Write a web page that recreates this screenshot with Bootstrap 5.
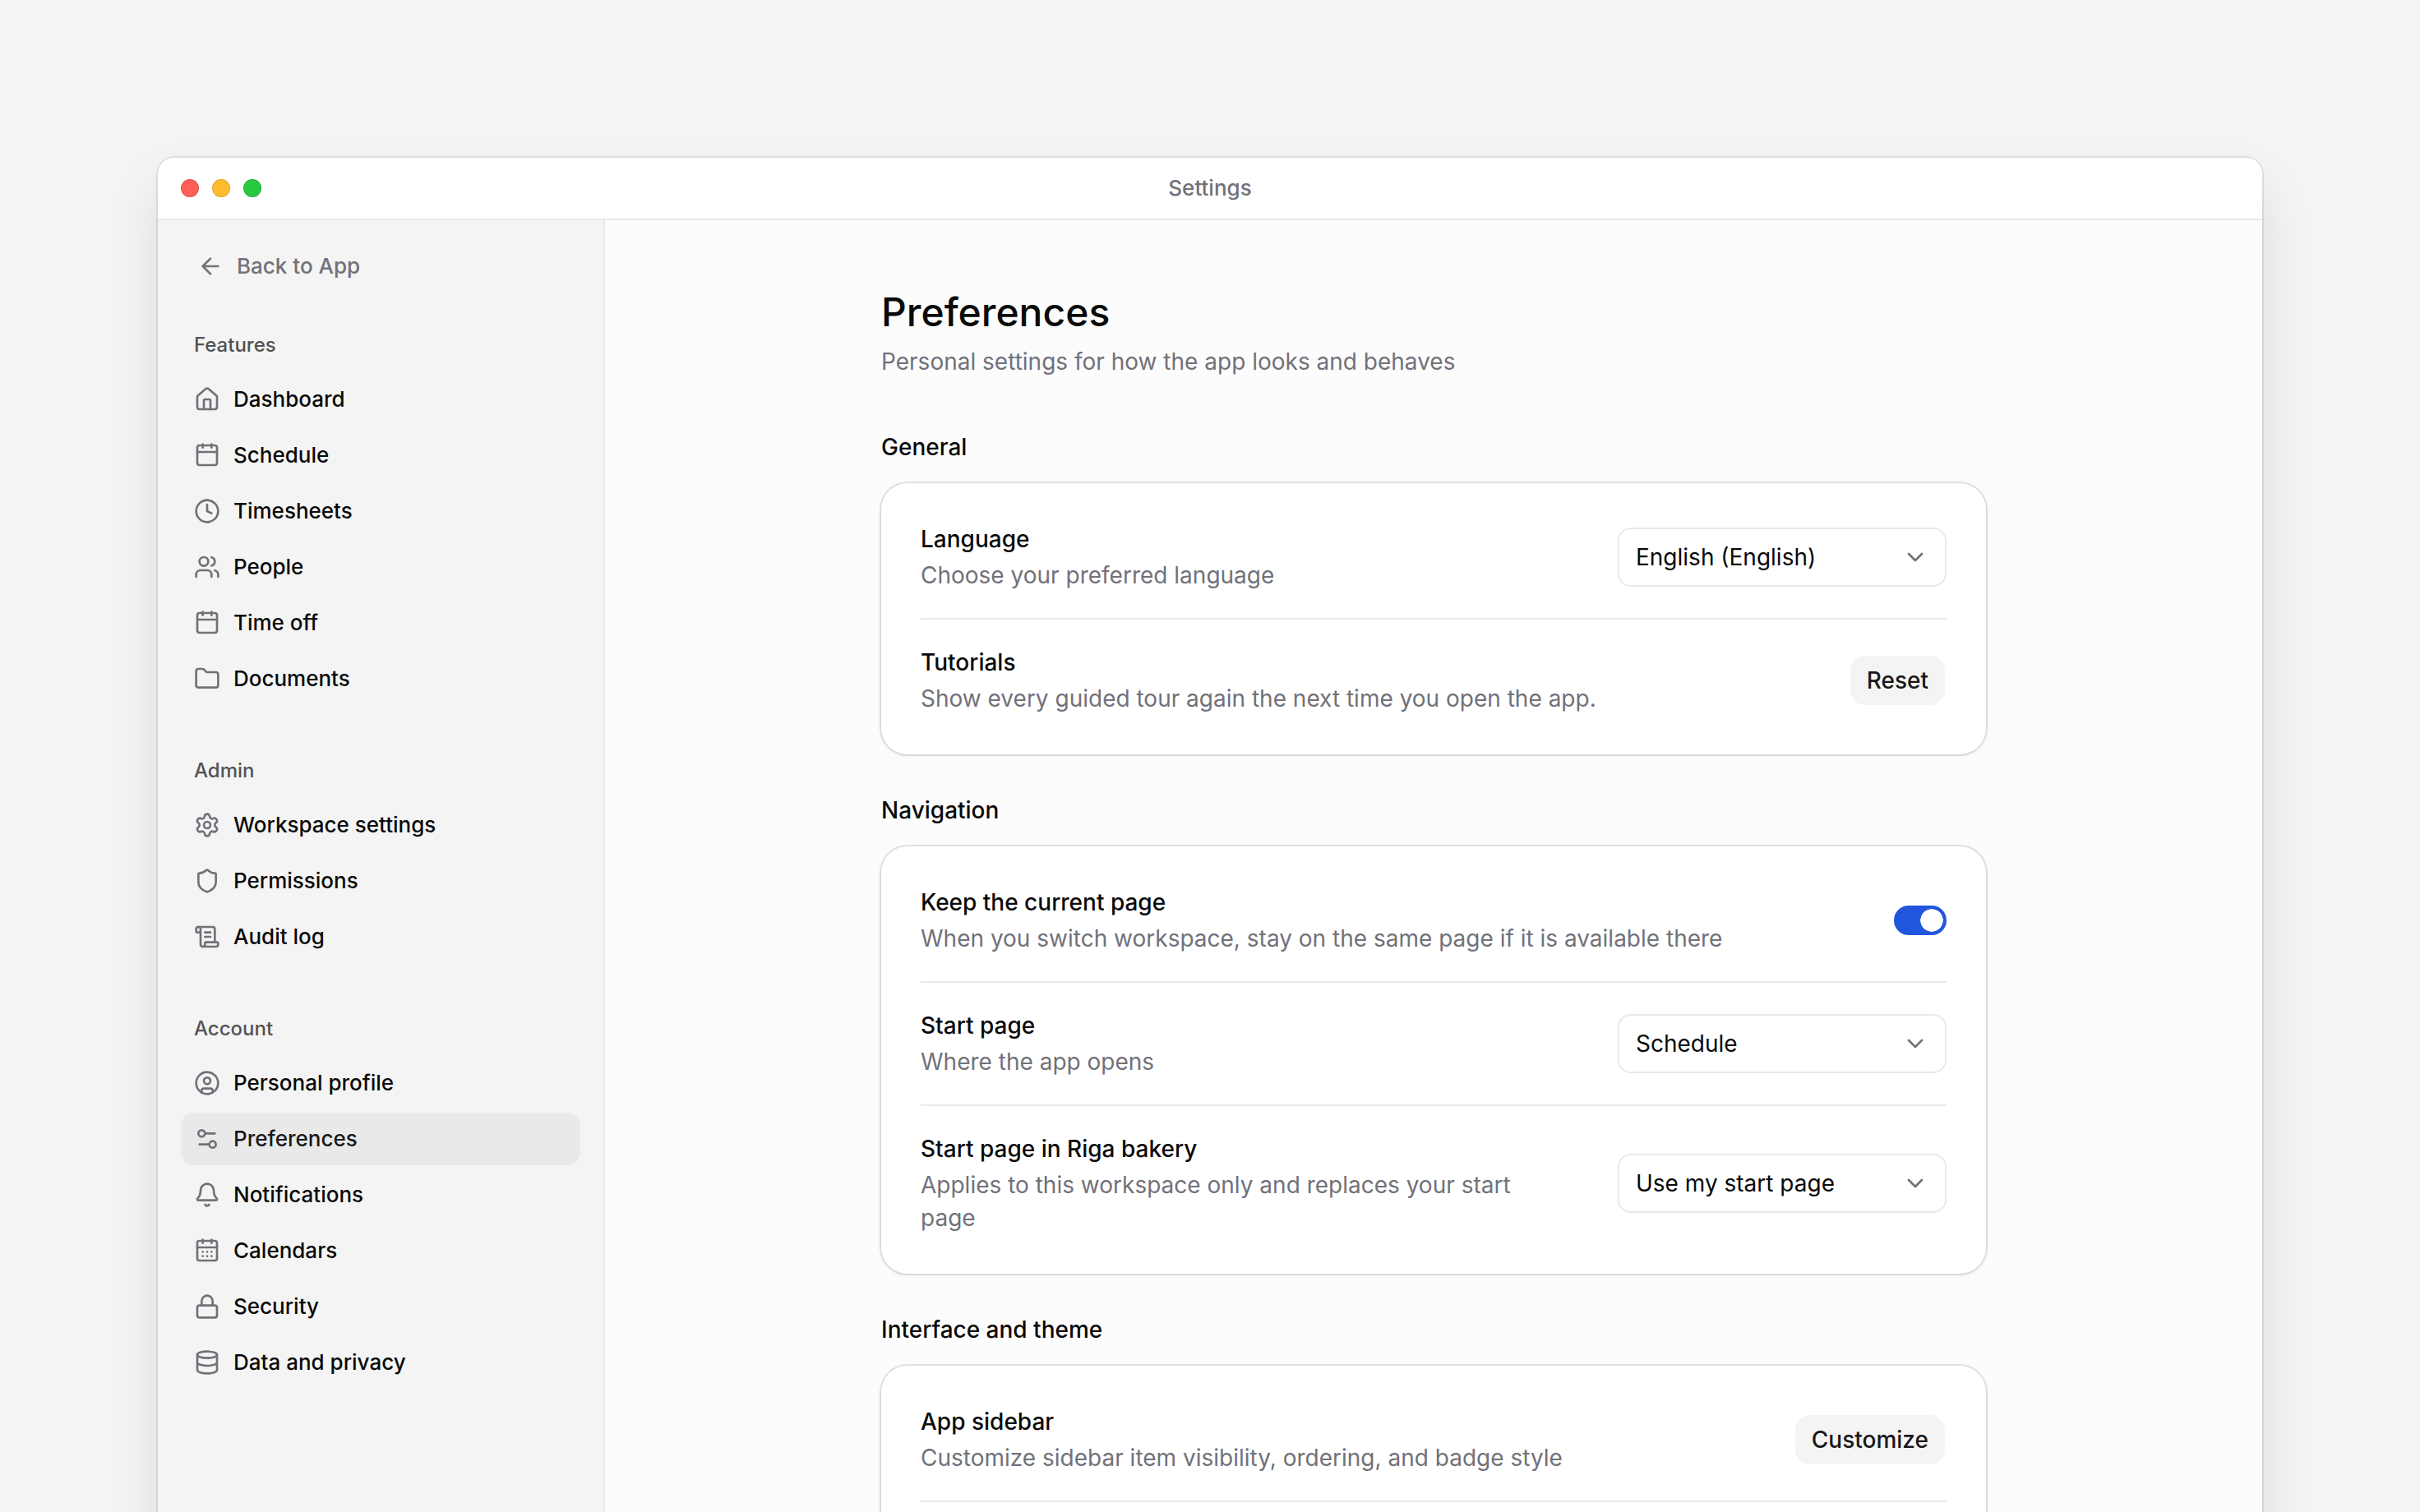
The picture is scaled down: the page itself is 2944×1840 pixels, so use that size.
<!DOCTYPE html>
<html lang="en">
<head>
<meta charset="utf-8">
<meta name="viewport" content="width=device-width, initial-scale=1">
<title>Settings</title>
<link href="https://cdn.jsdelivr.net/npm/bootstrap@5.3.0/dist/css/bootstrap.min.css" rel="stylesheet">
<style>
:root { --ink: #0a0a0a; --ink-soft: #18181b; --muted: #71717a; --line: #e9e9e9; --fill: #f4f4f4; }
body { font-family: Inter, "Liberation Sans", sans-serif; font-size: 28px; line-height: 40px; color: var(--ink); background: var(--fill); }
.desktop { padding: 192px 192px 0; }
.app-window { min-height: 100vh; border-radius: 20px 20px 0 0; background: #fcfcfc; box-shadow: 0 0 0 2px rgba(0,0,0,.08), 0 32px 64px rgba(0,0,0,.1); }
.titlebar { display: grid; grid-template-columns: 1fr auto 1fr; height: 76px; padding: 0 28px; background: #fff; border-bottom: 2px solid var(--line); border-radius: 20px 20px 0 0; }
.window-title { font-size: 26px; font-weight: 500; color: var(--muted); }
.lights { gap: 16px; }
.light { width: 22px; height: 22px; padding: 0; border: 1px solid rgba(0,0,0,.12); border-radius: 50%; }
.light-red { background: #ff5f57; } .light-amber { background: #febc2e; } .light-green { background: #28c840; }
.ico { width: 32px; height: 32px; flex: none; fill: none; stroke: var(--muted); stroke-width: 2; stroke-linecap: round; stroke-linejoin: round; }
.side { width: 544px; padding: 24px 28px; background: var(--fill); border-right: 2px solid var(--line); font-size: 26px; font-weight: 500; }
.back-link { height: 64px; padding: 0 20px; gap: 16px; color: var(--muted); text-decoration: none; }
.side-group { margin-top: 64px; }
.back-link + .side-group { margin-top: 48px; }
.side-title { margin: 0 0 18px; padding: 0 16px; font-size: 24px; line-height: 32px; font-weight: 500; color: #525252; }
.side .nav { gap: 4px; }
.side .nav-link { height: 64px; padding: 0 16px; gap: 16px; border-radius: 16px; color: var(--ink); }
.side .nav-link.active { background: #e9e9e9; color: var(--ink-soft); }
.main-pane { padding: 80px 48px; }
.content-col { width: 100%; max-width: 1344px; }
.page-title { margin: 0 0 8px; font-size: 48px; line-height: 64px; font-weight: 500; }
.soft { color: var(--muted); }
.group-title { margin: 0 0 24px; font-size: 28px; line-height: 40px; font-weight: 500; }
.content-col section { margin-top: 48px; }
.content-col header + section { margin-top: 64px; }
.panel { padding: 16px 48px; background: #fff; border-radius: 32px; box-shadow: 0 0 0 2px rgba(0,0,0,.1), 0 2px 6px rgba(0,0,0,.06); }
.setting { padding: 32px 0; gap: 64px; }
.setting + .setting { border-top: 2px solid var(--line); }
.setting-name { display: block; margin-bottom: 4px; font-weight: 500; }
.picker { width: 400px; flex: none; grid-template-columns: 1fr; }
.picker > * { grid-area: 1 / 1; }
.picker .form-select { height: 72px; padding: 0 60px 0 20px; font-size: 28px; line-height: 40px; color: var(--ink); background: #fff; border: 2px solid var(--line); border-radius: 16px; }
.picker .ico { justify-self: end; align-self: center; margin-right: 22px; pointer-events: none; }
.btn-quiet { height: 64px; flex: none; padding: 0 20px; font-size: 28px; line-height: 40px; font-weight: 500; color: var(--ink-soft); background: var(--fill); background-clip: padding-box; border: 2px solid transparent; border-radius: 20px; }
.form-switch .toggle { width: 64px; height: 36px; margin: 0; float: none; border: 0; border-radius: 18px; background-color: #c9c9cc; background-image: radial-gradient(closest-side, #fff 96%, transparent); background-size: 28px 28px; background-position: left 4px center; }
.form-switch .toggle:checked { background-color: #2055dd; background-image: radial-gradient(closest-side, #fff 96%, transparent); background-position: right 4px center; }
</style>
</head>
<body class="vh-100 overflow-hidden">
<svg class="d-none" aria-hidden="true">
  <symbol id="i-arrow" viewBox="0 0 24 24"><path d="m12 19-7-7 7-7M19 12H5"/></symbol>
  <symbol id="i-home" viewBox="0 0 24 24"><path d="M15 21v-8a1 1 0 0 0-1-1h-4a1 1 0 0 0-1 1v8"/><path d="M3 10a2 2 0 0 1 .709-1.528l7-5.999a2 2 0 0 1 2.582 0l7 5.999A2 2 0 0 1 21 10v9a2 2 0 0 1-2 2H5a2 2 0 0 1-2-2z"/></symbol>
  <symbol id="i-calendar" viewBox="0 0 24 24"><rect x="3" y="3" width="18" height="18" rx="2"/><path d="M3 9h18M8 2v3M16 2v3"/></symbol>
  <symbol id="i-calendar-days" viewBox="0 0 24 24"><rect x="3" y="3" width="18" height="18" rx="2"/><path d="M3 9h18M8 2v3M16 2v3M8 13h.01M12 13h.01M16 13h.01M8 17h.01M12 17h.01M16 17h.01"/></symbol>
  <symbol id="i-clock" viewBox="0 0 24 24"><circle cx="12" cy="12" r="10"/><path d="M12 6v6l4 2"/></symbol>
  <symbol id="i-users" viewBox="0 0 24 24"><path d="M16 21v-2a4 4 0 0 0-4-4H6a4 4 0 0 0-4 4v2M16 3.128a4 4 0 0 1 0 7.744M22 21v-2a4 4 0 0 0-3-3.87"/><circle cx="9" cy="7" r="4"/></symbol>
  <symbol id="i-folder" viewBox="0 0 24 24"><path d="M20 20a2 2 0 0 0 2-2V8a2 2 0 0 0-2-2h-7.9a2 2 0 0 1-1.69-.9L9.6 3.9A2 2 0 0 0 7.93 3H4a2 2 0 0 0-2 2v13a2 2 0 0 0 2 2Z"/></symbol>
  <symbol id="i-gear" viewBox="0 0 24 24"><path d="M9.671 4.136a2.34 2.34 0 0 1 4.659 0 2.34 2.34 0 0 0 3.319 1.915 2.34 2.34 0 0 1 2.33 4.033 2.34 2.34 0 0 0 0 3.831 2.34 2.34 0 0 1-2.33 4.033 2.34 2.34 0 0 0-3.319 1.915 2.34 2.34 0 0 1-4.659 0 2.34 2.34 0 0 0-3.32-1.915 2.34 2.34 0 0 1-2.33-4.033 2.34 2.34 0 0 0 0-3.831A2.34 2.34 0 0 1 6.35 6.051a2.34 2.34 0 0 0 3.319-1.915"/><circle cx="12" cy="12" r="3"/></symbol>
  <symbol id="i-shield" viewBox="0 0 24 24"><path d="M20 13c0 5-3.5 7.5-7.66 8.95a1 1 0 0 1-.67-.01C7.5 20.5 4 18 4 13V6a1 1 0 0 1 1-1c2 0 4.5-1.2 6.24-2.72a1.17 1.17 0 0 1 1.52 0C14.51 3.81 17 5 19 5a1 1 0 0 1 1 1z"/></symbol>
  <symbol id="i-scroll" viewBox="0 0 24 24"><path d="M15 12h-5M15 8h-5M19 17V5a2 2 0 0 0-2-2H4"/><path d="M8 21h12a2 2 0 0 0 2-2v-1a1 1 0 0 0-1-1H11a1 1 0 0 0-1 1v1a2 2 0 1 1-4 0V5a2 2 0 1 0-4 0v2a1 1 0 0 0 1 1h3"/></symbol>
  <symbol id="i-user" viewBox="0 0 24 24"><circle cx="12" cy="12" r="10"/><circle cx="12" cy="10" r="3"/><path d="M7 20.662V19a2 2 0 0 1 2-2h6a2 2 0 0 1 2 2v1.662"/></symbol>
  <symbol id="i-sliders" viewBox="0 0 24 24"><path d="M14 17H5M19 7h-9"/><circle cx="17" cy="17" r="3"/><circle cx="7" cy="7" r="3"/></symbol>
  <symbol id="i-bell" viewBox="0 0 24 24"><path d="M10.268 21a2 2 0 0 0 3.464 0M3.262 15.326A1 1 0 0 0 4 17h16a1 1 0 0 0 .74-1.673C19.41 13.956 18 12.499 18 8A6 6 0 0 0 6 8c0 4.499-1.411 5.956-2.738 7.326"/></symbol>
  <symbol id="i-lock" viewBox="0 0 24 24"><rect x="3" y="11" width="18" height="11" rx="2"/><path d="M7 11V7a5 5 0 0 1 10 0v4"/></symbol>
  <symbol id="i-database" viewBox="0 0 24 24"><ellipse cx="12" cy="5" rx="9" ry="3"/><path d="M3 5v14a9 3 0 0 0 18 0V5M3 12a9 3 0 0 0 18 0"/></symbol>
  <symbol id="i-chevron" viewBox="0 0 24 24"><path d="m6 9 6 6 6-6"/></symbol>
</svg>

<div class="desktop">
  <div class="app-window d-flex flex-column">
    <div class="titlebar align-items-center">
      <div class="lights d-flex">
        <button type="button" class="light light-red" aria-label="Close"></button>
        <button type="button" class="light light-amber" aria-label="Minimize"></button>
        <button type="button" class="light light-green" aria-label="Zoom"></button>
      </div>
      <div class="window-title">Settings</div>
    </div>

    <div class="d-flex flex-grow-1">
      <aside class="side flex-shrink-0">
        <a href="#" class="back-link d-flex align-items-center"><svg class="ico"><use href="#i-arrow"/></svg>Back to App</a>

        <div class="side-group">
          <h2 class="side-title">Features</h2>
          <nav class="nav flex-column" aria-label="Features">
            <a href="#" class="nav-link d-flex align-items-center"><svg class="ico"><use href="#i-home"/></svg>Dashboard</a>
            <a href="#" class="nav-link d-flex align-items-center"><svg class="ico"><use href="#i-calendar"/></svg>Schedule</a>
            <a href="#" class="nav-link d-flex align-items-center"><svg class="ico"><use href="#i-clock"/></svg>Timesheets</a>
            <a href="#" class="nav-link d-flex align-items-center"><svg class="ico"><use href="#i-users"/></svg>People</a>
            <a href="#" class="nav-link d-flex align-items-center"><svg class="ico"><use href="#i-calendar"/></svg>Time off</a>
            <a href="#" class="nav-link d-flex align-items-center"><svg class="ico"><use href="#i-folder"/></svg>Documents</a>
          </nav>
        </div>

        <div class="side-group">
          <h2 class="side-title">Admin</h2>
          <nav class="nav flex-column" aria-label="Admin">
            <a href="#" class="nav-link d-flex align-items-center"><svg class="ico"><use href="#i-gear"/></svg>Workspace settings</a>
            <a href="#" class="nav-link d-flex align-items-center"><svg class="ico"><use href="#i-shield"/></svg>Permissions</a>
            <a href="#" class="nav-link d-flex align-items-center"><svg class="ico"><use href="#i-scroll"/></svg>Audit log</a>
          </nav>
        </div>

        <div class="side-group">
          <h2 class="side-title">Account</h2>
          <nav class="nav flex-column" aria-label="Account">
            <a href="#" class="nav-link d-flex align-items-center"><svg class="ico"><use href="#i-user"/></svg>Personal profile</a>
            <a href="#" class="nav-link active d-flex align-items-center" aria-current="page"><svg class="ico"><use href="#i-sliders"/></svg>Preferences</a>
            <a href="#" class="nav-link d-flex align-items-center"><svg class="ico"><use href="#i-bell"/></svg>Notifications</a>
            <a href="#" class="nav-link d-flex align-items-center"><svg class="ico"><use href="#i-calendar-days"/></svg>Calendars</a>
            <a href="#" class="nav-link d-flex align-items-center"><svg class="ico"><use href="#i-lock"/></svg>Security</a>
            <a href="#" class="nav-link d-flex align-items-center"><svg class="ico"><use href="#i-database"/></svg>Data and privacy</a>
          </nav>
        </div>
      </aside>

      <main class="main-pane flex-grow-1">
        <div class="content-col mx-auto">
          <header>
            <h1 class="page-title">Preferences</h1>
            <p class="soft mb-0">Personal settings for how the app looks and behaves</p>
          </header>

          <section>
            <h2 class="group-title">General</h2>
            <div class="panel">
              <div class="setting d-flex align-items-center justify-content-between">
                <div>
                  <label class="setting-name" for="language">Language</label>
                  <p class="soft mb-0">Choose your preferred language</p>
                </div>
                <div class="picker d-grid">
                  <select class="form-select" id="language"><option>English (English)</option></select>
                  <svg class="ico"><use href="#i-chevron"/></svg>
                </div>
              </div>
              <div class="setting d-flex align-items-center justify-content-between">
                <div>
                  <span class="setting-name">Tutorials</span>
                  <p class="soft mb-0">Show every guided tour again the next time you open the app.</p>
                </div>
                <button type="button" class="btn btn-quiet">Reset</button>
              </div>
            </div>
          </section>

          <section>
            <h2 class="group-title">Navigation</h2>
            <div class="panel">
              <div class="setting d-flex align-items-center justify-content-between">
                <div>
                  <label class="setting-name" for="keep-page">Keep the current page</label>
                  <p class="soft mb-0">When you switch workspace, stay on the same page if it is available there</p>
                </div>
                <div class="form-switch d-flex flex-shrink-0 p-0">
                  <input class="form-check-input toggle" type="checkbox" role="switch" id="keep-page" checked>
                </div>
              </div>
              <div class="setting d-flex align-items-center justify-content-between">
                <div>
                  <label class="setting-name" for="start-page">Start page</label>
                  <p class="soft mb-0">Where the app opens</p>
                </div>
                <div class="picker d-grid">
                  <select class="form-select" id="start-page"><option>Schedule</option></select>
                  <svg class="ico"><use href="#i-chevron"/></svg>
                </div>
              </div>
              <div class="setting d-flex align-items-center justify-content-between">
                <div>
                  <label class="setting-name" for="riga-page">Start page in Riga bakery</label>
                  <p class="soft mb-0">Applies to this workspace only and replaces your start page</p>
                </div>
                <div class="picker d-grid">
                  <select class="form-select" id="riga-page"><option>Use my start page</option></select>
                  <svg class="ico"><use href="#i-chevron"/></svg>
                </div>
              </div>
            </div>
          </section>

          <section>
            <h2 class="group-title">Interface and theme</h2>
            <div class="panel">
              <div class="setting d-flex align-items-center justify-content-between">
                <div>
                  <span class="setting-name">App sidebar</span>
                  <p class="soft mb-0">Customize sidebar item visibility, ordering, and badge style</p>
                </div>
                <button type="button" class="btn btn-quiet">Customize</button>
              </div>
              <div class="setting"></div>
            </div>
          </section>
        </div>
      </main>
    </div>
  </div>
</div>
<script src="https://cdn.jsdelivr.net/npm/bootstrap@5.3.0/dist/js/bootstrap.bundle.min.js"></script>
</body>
</html>
